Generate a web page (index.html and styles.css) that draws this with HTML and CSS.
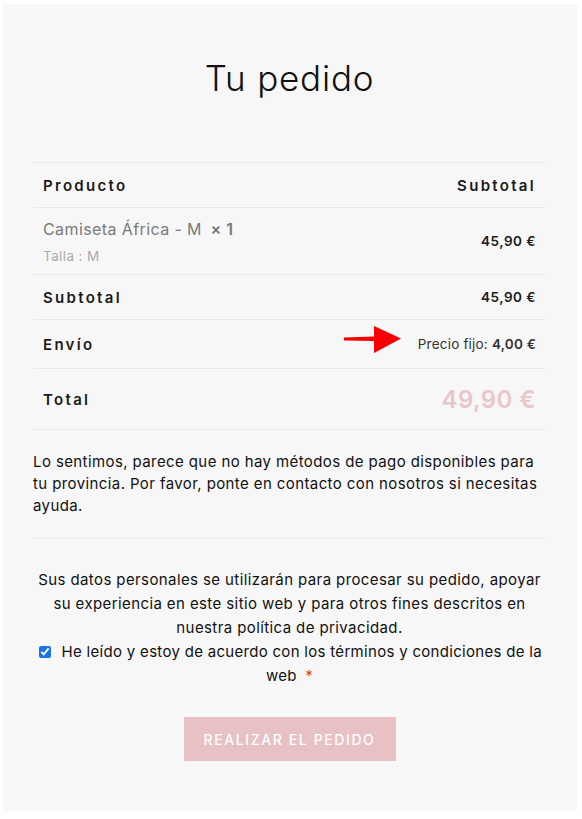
FILE: index.html
```html
<!DOCTYPE html>
<html lang="es">
  <head>
    <meta charset="UTF-8" />
    <meta name="viewport" content="width=device-width, initial-scale=1.0" />
    <link rel="stylesheet" href="styles.css">
  </head>
  <body>
    <div class="order">
      <h3 class="order-title">Tu pedido</h3>

      <table class="order-table">
        <thead>
          <tr>
            <th class="label">Producto</th>
            <th class="label amount">Subtotal</th>
          </tr>
        </thead>
        <tbody>
          <tr class="cart-item">
            <td>
              <span class="product-name">Camiseta África - M</span>
              <strong class="qty">&times;&nbsp;1</strong>
              <div class="variation">Talla : M</div>
            </td>
            <td class="amount"><strong>45,90 €</strong></td>
          </tr>
        </tbody>
        <tfoot>
          <tr class="subtotal">
            <th class="label">Subtotal</th>
            <td class="amount"><strong>45,90 €</strong></td>
          </tr>
          <tr class="shipping">
            <th class="label">Envío</th>
            <td class="amount">
              <span class="shipping-wrap">
                Precio fijo: <strong>4,00 €</strong>
                <svg class="arrow" width="58" height="30" viewBox="0 0 58 30">
                  <path d="M0 12.5 L30 11.5 L30 1 L57 13.5 L30 28 L30 16 L0 15.5 Z" fill="#f60000" />
                </svg>
              </span>
            </td>
          </tr>
          <tr class="total">
            <th class="label">Total</th>
            <td class="amount"><strong>49,90 €</strong></td>
          </tr>
        </tfoot>
      </table>

      <p class="no-payment">
        Lo sentimos, parece que no hay métodos de pago disponibles para tu provincia. Por favor, ponte en contacto con nosotros si necesitas ayuda.
      </p>

      <div class="terms">
        <p>Sus datos personales se utilizarán para procesar su pedido, apoyar su experiencia en este sitio web y para otros fines descritos en nuestra política de privacidad.</p>
        <label class="terms-check">
          <input type="checkbox" checked />
          He leído y estoy de acuerdo con los términos y condiciones de la web&nbsp;<abbr class="required">*</abbr>
        </label>
      </div>

      <div class="place-order">
        <button class="btn-order" disabled>Realizar el pedido</button>
      </div>
    </div>
  </body>
</html>
```

FILE: styles.css
```css
body {
  margin: 0;
  padding: 4px 5px 8px 3px;
  background-color: #fff;
  font-family: Inter, "Open Sans", sans-serif;
  letter-spacing: 0.4px;
  color: #111;
}

.order {
  background-color: #f7f7f7;
  padding: 52px 31px 50px 30px;
}

.order-title {
  margin: 0 0 62px;
  text-align: center;
  font-size: 35px;
  font-weight: 300;
  line-height: 44px;
  letter-spacing: 0.8px;
  color: #111;
}

.order-table {
  width: 100%;
  border-collapse: collapse;
  font-size: 15px;
}

.order-table tr {
  border-top: 1px solid #e9e9e9;
  border-bottom: 1px solid #e9e9e9;
}

.order-table th,
.order-table td {
  padding: 0 10px;
  text-align: left;
  vertical-align: middle;
}

.order-table .amount {
  text-align: right;
}

.order-table th.label {
  font-weight: 600;
  letter-spacing: 2.3px;
  color: #1a1a1a;
}

.order-table thead tr {
  height: 45px;
}

.cart-item {
  height: 67px;
}

.product-name {
  font-size: 16px;
  color: #7a7a7a;
}

.qty {
  margin-left: 4px;
  font-size: 16px;
  font-weight: 700;
  color: #777;
}

.variation {
  margin-top: 9px;
  font-size: 13.5px;
  color: #ababab;
}

.order-table strong {
  font-weight: 600;
}

.order-table td.amount {
  font-size: 13.5px;
  letter-spacing: 0.5px;
  color: #1a1a1a;
}

.subtotal {
  height: 45px;
}

.shipping {
  height: 49px;
}

.shipping td.amount {
  letter-spacing: 0.2px;
  color: #333;
}

.shipping-wrap {
  position: relative;
}

.arrow {
  position: absolute;
  left: -74px;
  top: -11px;
}

.total {
  height: 61px;
}

.total td.amount strong {
  font-size: 24px;
  font-weight: 600;
  letter-spacing: 0.4px;
  color: #e9c6ca;
}

.no-payment {
  margin: 0;
  padding: 21px 0;
  border-bottom: 1px solid #ececec;
  font-size: 15px;
  line-height: 22px;
  color: #111;
}

.terms {
  padding-top: 29px;
  text-align: center;
  font-size: 15px;
  line-height: 24px;
}

.terms p {
  margin: 0;
}

.terms-check {
  letter-spacing: 0.3px;
}

.terms-check input {
  width: 12px;
  height: 12px;
  margin: 0 6px 0 2px;
  accent-color: #1a73e8;
  vertical-align: -1px;
}

.required {
  margin-left: 4px;
  color: #e2401c;
  text-decoration: none;
}

.place-order {
  display: flex;
  justify-content: center;
  padding-top: 29px;
}

.btn-order {
  width: 212px;
  height: 44px;
  border: none;
  background-color: #e8c1c5;
  color: #fff;
  font-family: inherit;
  font-size: 14px;
  font-weight: 500;
  letter-spacing: 1.6px;
  text-transform: uppercase;
}
```
